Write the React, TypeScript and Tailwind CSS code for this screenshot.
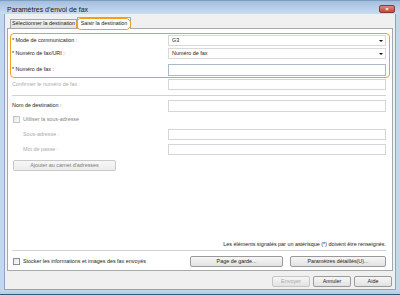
import React from "react";

function Arrow() {
  return (
    <svg width="4" height="2" viewBox="0 0 4 2" className="mr-[2px]">
      <path d="M0 0 H4 L2 2 Z" fill="#111" />
    </svg>
  );
}

function Checkbox({ disabled }: { disabled?: boolean }) {
  return (
    <div
      className={
        "w-[7px] h-[7px] border bg-gradient-to-br from-[#e8e8e8] to-[#fafafa] " +
        (disabled ? "border-[#c4c4c4]" : "border-[#8f8f8f]")
      }
    />
  );
}

function Btn({ label, w, disabled }: { label: string; w: string; disabled?: boolean }) {
  return (
    <div
      className={
        "h-full flex items-center justify-center rounded-[2px] border bg-gradient-to-b from-[#f6f6f6] to-[#e2e2e2] " +
        w +
        (disabled ? " border-[#c6c6c6] text-[#a8a8a8]" : " border-[#9a9a9a] text-[#1b1b1b]")
      }
    >
      {label}
    </div>
  );
}

export default function App() {
  const input = "flex-1 h-full bg-white border border-[#d2d5da]";
  const label = "w-[156px] shrink-0";
  return (
    <div className="relative w-[400px] h-[295px] overflow-hidden flex flex-col bg-[#c4d8ed] font-['Liberation_Sans',Arial,sans-serif] text-[5.4px] leading-none text-[#1b1b1b]">
      {/* title bar */}
      <div className="h-[14px] shrink-0 flex items-end justify-between pb-[1px] pl-[7px] pr-[5px] bg-gradient-to-b from-[#a3bfdf] to-[#c9dcf0] border-t border-[#7f9dbd]">
        <span className="text-[7px] text-[#161616]">Paramètres d'envoi de fax</span>
        <div className="w-[16px] h-[8px] rounded-[2px] border border-[#8a3a33] bg-gradient-to-b from-[#d98a7d] to-[#c0473a] flex items-center justify-center">
          <span className="text-[6px] font-bold text-white leading-none">×</span>
        </div>
      </div>

      {/* body */}
      <div className="mx-[4px] h-[276px] shrink-0 bg-[#f0f0f0] border-x border-b border-[#8ca5c1] flex flex-col">
        {/* tabs */}
        <div className="h-[11px] mt-[3px] flex items-end pl-[5px]">
          <div className="h-[9px] w-[67px] border border-b-0 border-[#a3a9b1] bg-gradient-to-b from-[#f4f4f4] to-[#e3e3e3] flex items-center justify-center">
            Sélectionner la destination
          </div>
          <div className="relative z-10 h-[12px] w-[54px] -mb-px border border-b-0 border-[#a3a9b1] bg-white flex items-center justify-center">
            Saisir la destination
          </div>
        </div>

        {/* panel */}
        <div className="ml-[2px] w-[386px] h-[243px] bg-white border border-[#a3a9b1] flex flex-col pl-[4px] pr-[6px]">
          <div className="mt-[6px] h-[11px] flex items-center">
            <span className={label}>* Mode de communication :</span>
            <div className="flex-1 h-full bg-white border border-[#d9d9d9] flex items-center justify-between pl-[3px]">
              <span>G3</span>
              <Arrow />
            </div>
          </div>
          <div className="mt-[2px] h-[11px] flex items-center">
            <span className={label}>* Numéro de fax/URI :</span>
            <div className="flex-1 h-full bg-white border border-[#d9d9d9] flex items-center justify-between pl-[3px]">
              <span>Numéro de fax</span>
              <Arrow />
            </div>
          </div>
          <div className="mt-[5px] h-[12px] flex items-center">
            <span className={label}>* Numéro de fax :</span>
            <div className="flex-1 h-full bg-white border border-[#a9bacd]" />
          </div>
          <div className="mt-[3px] h-[11px] flex items-center">
            <span className={label + " text-[#ababab]"}>Confirmer le numéro de fax :</span>
            <div className={input} />
          </div>
          <div className="mt-[5px] h-px bg-[#d2d2d2]" />
          <div className="mt-[4px] h-[12px] flex items-center">
            <span className={label}>Nom de destination :</span>
            <div className={input} />
          </div>
          <div className="mt-[3px] h-[9px] flex items-center gap-[3px] pl-[1px] text-[#858585]">
            <Checkbox disabled />
            <span>Utiliser la sous-adresse</span>
          </div>
          <div className="mt-[5px] h-[11px] flex items-center">
            <span className="w-[156px] shrink-0 pl-[11px] text-[#ababab]">Sous-adresse :</span>
            <div className={input} />
          </div>
          <div className="mt-[4px] h-[11px] flex items-center">
            <span className="w-[156px] shrink-0 pl-[11px] text-[#ababab]">Mot de passe :</span>
            <div className={input} />
          </div>
          <div className="mt-[5px] h-[11px] ml-[1px] w-[103px] flex items-center justify-center rounded-[2px] border border-[#c9c9c9] bg-gradient-to-b from-[#f7f7f7] to-[#ececec] text-[#7c7c7c]">
            Ajouter au carnet d'adresses
          </div>

          <div className="flex-1" />

          <div className="h-[7px] flex items-center justify-end">
            Les éléments signalés par un astérisque (*) doivent être renseignés.
          </div>
          <div className="mt-[2px] h-px bg-[#d2d2d2]" />
          <div className="mt-[5px] mb-[3px] h-[11px] flex items-center">
            <div className="flex items-center gap-[3px] pl-[1px]">
              <Checkbox />
              <span>Stocker les informations et images des fax envoyés</span>
            </div>
            <div className="ml-auto h-full flex gap-[7px]">
              <Btn label="Page de garde..." w="w-[93px]" />
              <Btn label="Paramètres détaillés(U)..." w="w-[96px]" />
            </div>
          </div>
        </div>

        {/* dialog buttons */}
        <div className="mt-[5px] h-[11px] flex justify-end gap-[3px] pr-[3px]">
          <Btn label="Envoyer" w="w-[38px]" disabled />
          <Btn label="Annuler" w="w-[38px]" />
          <Btn label="Aide" w="w-[38px]" />
        </div>
      </div>

      {/* bottom frame */}
      <div className="flex-1 border-b border-[#2f5f78] bg-gradient-to-b from-[#c4d8ed] to-[#b3cbe4]" />

      {/* annotation overlays */}
      <div className="absolute left-[76px] top-[18px] w-[55px] h-[12px] rounded-[5px] border-[1.5px] border-[#f3a11c] z-20" />
      <div className="absolute left-[10px] top-[33px] w-[380px] h-[45px] rounded-[4px] border-[1.5px] border-[#f3a11c] z-20" />
    </div>
  );
}
